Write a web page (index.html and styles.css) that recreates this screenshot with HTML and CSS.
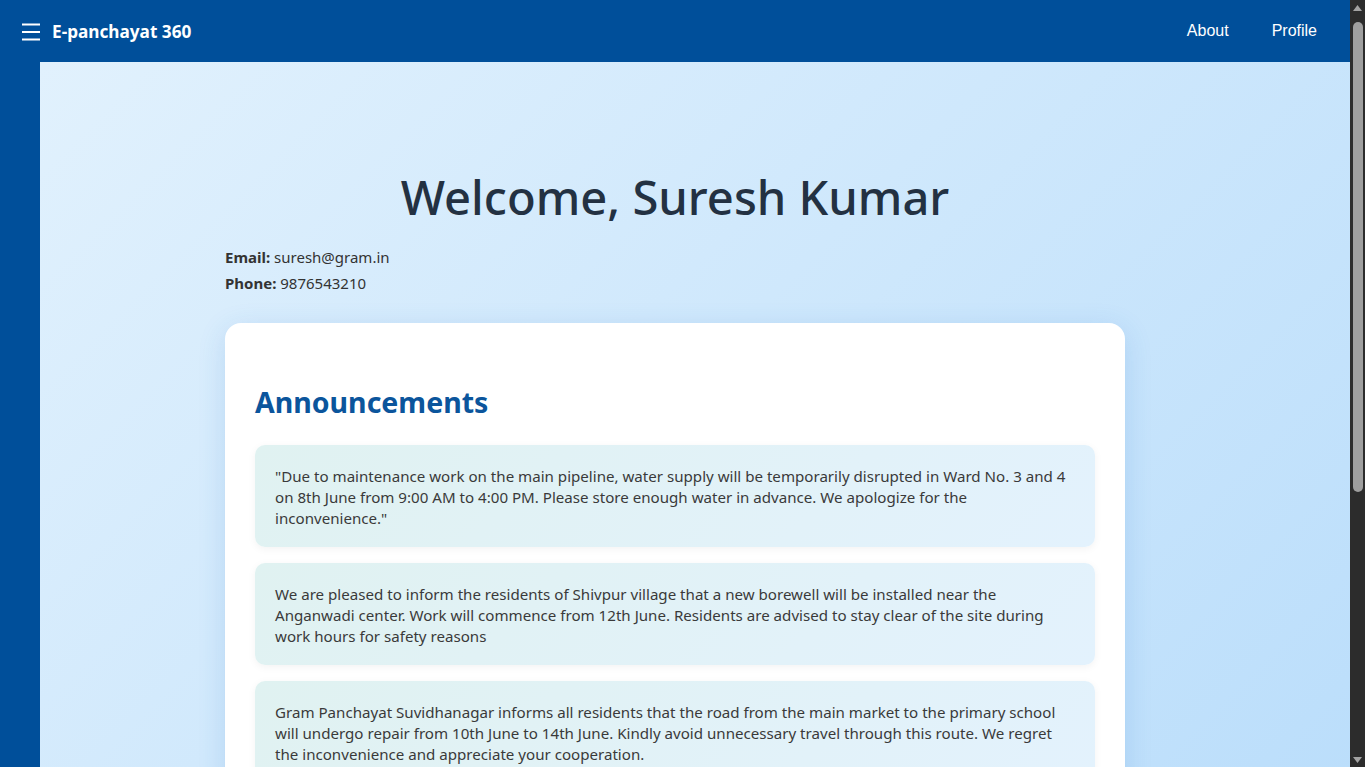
FILE: index.html
```html
<!DOCTYPE html>
<html lang="en">
<head>
<meta charset="utf-8">
<title>E-panchayat 360</title>
<link rel="stylesheet" href="styles.css">
</head>
<body>
<header class="navbar">
  <div class="brand">
    <button class="menu-btn" aria-label="Menu">
      <svg width="18" height="18" viewBox="0 0 18 18"><path d="M0 1.5H18M0 9H18M0 16.5H18" stroke="#fff" stroke-width="2" fill="none"/></svg>
    </button>
    <span class="brand-name">E-panchayat 360</span>
  </div>
  <nav class="nav-links">
    <a href="#">About</a>
    <a href="#">Profile</a>
  </nav>
</header>
<aside class="sidebar"></aside>
<main class="main">
  <div class="container">
    <h1 class="welcome">Welcome, Suresh Kumar</h1>
    <div class="user-info">
      <p><strong>Email:</strong> suresh@gram.in</p>
      <p><strong>Phone:</strong> 9876543210</p>
    </div>
    <section class="card">
      <h2 class="card-title">Announcements</h2>
      <div class="list">
        <div class="item">"Due to maintenance work on the main pipeline, water supply will be temporarily disrupted in Ward No. 3 and 4 on 8th June from 9:00 AM to 4:00 PM. Please store enough water in advance. We apologize for the inconvenience."</div>
        <div class="item">We are pleased to inform the residents of Shivpur village that a new borewell will be installed near the Anganwadi center. Work will commence from 12th June. Residents are advised to stay clear of the site during work hours for safety reasons</div>
        <div class="item">Gram Panchayat Suvidhanagar informs all residents that the road from the main market to the primary school will undergo repair from 10th June to 14th June. Kindly avoid unnecessary travel through this route. We regret the inconvenience and appreciate your cooperation.</div>
        <div class="item">A free health check-up camp will be organised at the Panchayat Bhavan on 20th June from 10:00 AM to 2:00 PM. All villagers, especially senior citizens and pregnant women, are requested to attend.</div>
        <div class="item">The Gram Sabha meeting will be held on 25th June at 11:00 AM in the community hall. All residents are invited to participate and share their suggestions for village development works.</div>
      </div>
    </section>
  </div>
</main>
<div class="scrollbar" aria-hidden="true">
  <div class="sb-arrow">
    <svg width="9" height="6" viewBox="0 0 9 6"><path d="M4.5 0L9 6H0Z" fill="#a3a3a3"/></svg>
  </div>
  <div class="sb-track"><div class="sb-thumb"></div></div>
  <div class="sb-arrow">
    <svg width="9" height="6" viewBox="0 0 9 6"><path d="M0 0H9L4.5 6Z" fill="#a3a3a3"/></svg>
  </div>
</div>
</body>
</html>
```
FILE: styles.css
```css
* {
  box-sizing: border-box;
}
html,
body {
  overflow-x: hidden;
}
body {
  margin: 0 15px 0 0;
  font-family: "Noto Sans", "Open Sans", sans-serif;
  color: #333;
  background: #004f9a;
}
.navbar {
  height: 62px;
  background: #004f9a;
  display: flex;
  align-items: center;
  justify-content: space-between;
  padding: 0 33px 0 22px;
}
.brand {
  display: flex;
  align-items: center;
  gap: 12px;
}
.menu-btn {
  background: none;
  border: 0;
  padding: 0;
  display: flex;
  margin-top: 2px;
  cursor: pointer;
}
.brand-name {
  color: #fff;
  font-weight: 700;
  font-size: 17.2px;
}
.nav-links {
  display: flex;
  gap: 43px;
}
.nav-links a {
  color: #fff;
  text-decoration: none;
  font-family: "Liberation Sans", Arial, sans-serif;
  font-size: 16px;
}
.sidebar {
  position: fixed;
  left: 0;
  top: 62px;
  bottom: 0;
  width: 40px;
  background: #004f9a;
  z-index: 2;
}
.main {
  background: linear-gradient(135deg, #e3f2fd 0%, #bbdefb 100%);
  background-attachment: fixed;
  padding: 106px 20px 140px;
  color: #333;
}
.container {
  max-width: 900px;
  margin: 0 auto;
}
.welcome {
  margin: 0;
  text-align: center;
  font-size: 47.1px;
  font-weight: 500;
  line-height: 58px;
  color: #233142;
}
.user-info {
  margin-top: 19px;
  font-size: 15px;
  color: #333;
}
.user-info p {
  margin: 0;
  line-height: 25.5px;
}
.user-info strong {
  color: #333;
}
.card {
  margin-top: 27px;
  background: #fff;
  border-radius: 16px;
  padding: 60px 30px 30px;
  box-shadow: 0 6px 28px rgba(40, 110, 200, 0.16);
}
.card-title {
  margin: 0 0 24px;
  font-size: 28.5px;
  line-height: 38px;
  font-weight: 700;
  color: #0b559c;
}
.list {
  display: flex;
  flex-direction: column;
  gap: 16px;
}
.item {
  background: linear-gradient(135deg, #e0f2f1 0%, #e3f2fd 100%);
  border-radius: 10px;
  padding: 20.5px 20px 18.5px;
  font-size: 15.12px;
  line-height: 21px;
  color: #3a3a3a;
  box-shadow: 0 2px 8px rgba(0, 0, 0, 0.05);
}
.scrollbar {
  position: fixed;
  top: 0;
  right: 0;
  width: 15px;
  height: 100vh;
  background: #2c2c2c;
  display: flex;
  flex-direction: column;
  z-index: 5;
}
.sb-arrow {
  height: 15px;
  display: flex;
  align-items: center;
  justify-content: center;
}
.sb-track {
  flex: 1;
  padding: 7px 2px 0 3px;
}
.sb-thumb {
  height: 470px;
  background: #9f9f9f;
  border-radius: 5px;
}
```
